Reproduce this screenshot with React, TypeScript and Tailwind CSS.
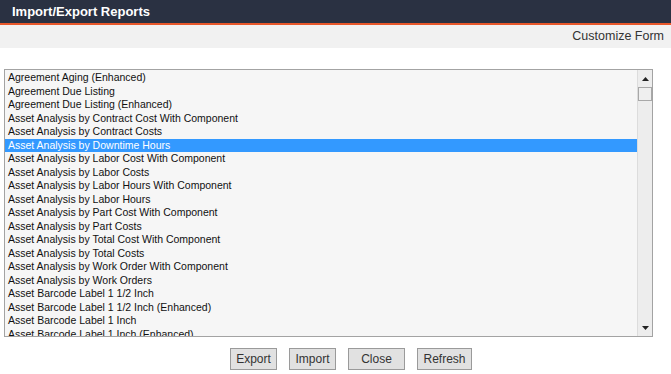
import React from "react";

// Import/Export Reports — report picker list with action buttons

const reports = [
    "Agreement Aging (Enhanced)",
    "Agreement Due Listing",
    "Agreement Due Listing (Enhanced)",
    "Asset Analysis by Contract Cost With Component",
    "Asset Analysis by Contract Costs",
    "Asset Analysis by Downtime Hours",
    "Asset Analysis by Labor Cost With Component",
    "Asset Analysis by Labor Costs",
    "Asset Analysis by Labor Hours With Component",
    "Asset Analysis by Labor Hours",
    "Asset Analysis by Part Cost With Component",
    "Asset Analysis by Part Costs",
    "Asset Analysis by Total Cost With Component",
    "Asset Analysis by Total Costs",
    "Asset Analysis by Work Order With Component",
    "Asset Analysis by Work Orders",
    "Asset Barcode Label 1 1/2 Inch",
    "Asset Barcode Label 1 1/2 Inch (Enhanced)",
    "Asset Barcode Label 1 Inch",
    "Asset Barcode Label 1 Inch (Enhanced)",
];

const SELECTED = "Asset Analysis by Downtime Hours";

function Button({ label, width }: { label: string; width: string }) {
    return (
        <button
            className={`${width} h-[22px] bg-[#e1e1e1] border border-[#9a9a9a] text-[12px] leading-none text-[#333] flex items-center justify-center`}
        >
            {label}
        </button>
    );
}

export default function App() {
    return (
        <div className="w-[671px] h-[374px] bg-white overflow-hidden font-['Liberation_Sans',Arial,sans-serif]">
            {/* Title bar */}
            <div className="h-[23px] bg-[#2a3142] flex items-center px-[12px]">
                <span className="text-white font-bold text-[13px]">Import/Export Reports</span>
            </div>
            <div className="h-[2px] bg-[#e8572a]" />

            {/* Toolbar */}
            <div className="h-[23px] bg-[#f1f1f1] flex items-center justify-end pr-[7px]">
                <span className="text-[12.5px] text-[#333]">Customize Form</span>
            </div>

            {/* List box */}
            <div className="mt-[21px] ml-[4px] w-[649px] h-[268px] border border-[#a3a3a3] bg-[#f6f6f6] flex">
                <div className="flex-1 overflow-hidden pt-[1px]">
                    {reports.map((r) => (
                        <div
                            key={r}
                            className={`h-[13.5px] leading-[13.5px] text-[10.5px] pl-[3px] whitespace-nowrap ${
                                r === SELECTED ? "bg-[#3399ff] text-white" : "text-[#111]"
                            }`}
                        >
                            {r}
                        </div>
                    ))}
                </div>

                {/* Scrollbar */}
                <div className="w-[15px] bg-[#ededed] border-l border-[#dcdcdc] flex flex-col items-center">
                    <div className="h-[17px] flex items-center justify-center">
                        <svg width="7" height="4" viewBox="0 0 7 4">
                            <path d="M3.5 0 L7 4 L0 4 Z" fill="#222" />
                        </svg>
                    </div>
                    <div className="w-[14px] h-[14px] bg-[#efefef] border border-[#a8a8a8]" />
                    <div className="flex-1" />
                    <div className="h-[17px] flex items-center justify-center">
                        <svg width="7" height="4" viewBox="0 0 7 4">
                            <path d="M0 0 L7 0 L3.5 4 Z" fill="#222" />
                        </svg>
                    </div>
                </div>
            </div>

            {/* Actions */}
            <div className="mt-[11px] flex justify-start pl-[230px] gap-[12px]">
                <Button label="Export" width="w-[47px]" />
                <Button label="Import" width="w-[47px]" />
                <Button label="Close" width="w-[57px]" />
                <Button label="Refresh" width="w-[55px]" />
            </div>
        </div>
    );
}
